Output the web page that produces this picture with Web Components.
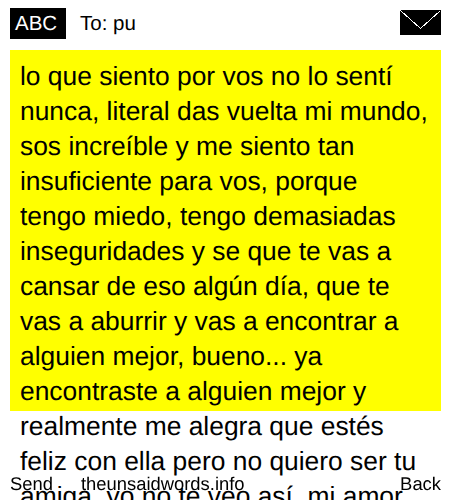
<!DOCTYPE html>
<html>
<head>
<meta charset="utf-8">
<title>The Unsaid Words</title>
<style>
    html, body { margin: 0; height: 100%; overflow: hidden; background: #fff; }
    body { font-family: "Liberation Sans", Arial, sans-serif; color: #000; text-rendering: geometricPrecision; }
</style>
</head>
<body>
<message-screen>
    <message-header to="pu"></message-header>
    <message-note>lo que siento por vos no lo sentí nunca, literal das vuelta mi mundo, sos increíble y me siento tan insuficiente para vos, porque tengo miedo, tengo demasiadas inseguridades y se que te vas a cansar de eso algún día, que te vas a aburrir y vas a encontrar a alguien mejor, bueno... ya encontraste a alguien mejor y realmente me alegra que estés feliz con ella pero no quiero ser tu amiga, yo no te veo así, mi amor</message-note>
    <soft-keys></soft-keys>
</message-screen>

<script>
class MessageScreen extends HTMLElement {
    constructor() {
        super();
        this.attachShadow({mode: 'open'});
        this.shadowRoot.innerHTML = `
            <style>
                :host {
                    display: flex;
                    flex-direction: column;
                    height: 500px;
                    padding: 8px 9px 0 10px;
                    box-sizing: border-box;
                    gap: 11px;
                }
            </style>
            <slot></slot>
        `;
    }
}

class MessageHeader extends HTMLElement {
    constructor() {
        super();
        this.attachShadow({mode: 'open'});
        this.shadowRoot.innerHTML = `
            <style>
                :host {
                    display: flex;
                    align-items: center;
                    height: 31px;
                    font-size: 20.5px;
                }
                .mode {
                    background: #000;
                    color: #fff;
                    width: 51px;
                    padding-left: 5px;
                    height: 31px;
                    line-height: 31px;
                }
                .to {
                    margin-left: 14px;
                    flex: 1;
                }
                svg {
                    display: block;
                    align-self: flex-start;
                    width: 41px;
                    height: 25px;
                    margin-top: 2px;
                }
            </style>
            <span class="mode">ABC</span>
            <span class="to">To: <span id="to"></span></span>
            <svg viewBox="0 0 41 25" shape-rendering="crispEdges">
                <rect width="41" height="25" fill="#000"/>
                <path d="M0.5 0.5 L20.5 18.5 L40.5 0.5" fill="none" stroke="#fff" stroke-width="1"/>
            </svg>
        `;
        this.shadowRoot.getElementById('to').textContent = this.getAttribute('to');
    }
}

class MessageNote extends HTMLElement {
    constructor() {
        super();
        this.attachShadow({mode: 'open'});
        this.shadowRoot.innerHTML = `
            <style>
                :host {
                    display: block;
                    height: 361px;
                    background: #ff0;
                    padding: 9px 12px 0 10px;
                    box-sizing: border-box;
                    font-size: 26.4px;
                    line-height: 35px;
                }
            </style>
            <slot></slot>
        `;
    }
}

class SoftKeys extends HTMLElement {
    constructor() {
        super();
        this.attachShadow({mode: 'open'});
        this.shadowRoot.innerHTML = `
            <style>
                :host {
                    position: fixed;
                    left: 10px;
                    right: 9px;
                    bottom: 6px;
                    display: flex;
                    font-size: 18.4px;
                    line-height: 21px;
                }
                .site { margin-left: 28px; flex: 1; }
            </style>
            <span>Send</span>
            <span class="site">theunsaidwords.info</span>
            <span>Back</span>
        `;
    }
}

customElements.define('message-screen', MessageScreen);
customElements.define('message-header', MessageHeader);
customElements.define('message-note', MessageNote);
customElements.define('soft-keys', SoftKeys);
</script>
</body>
</html>
